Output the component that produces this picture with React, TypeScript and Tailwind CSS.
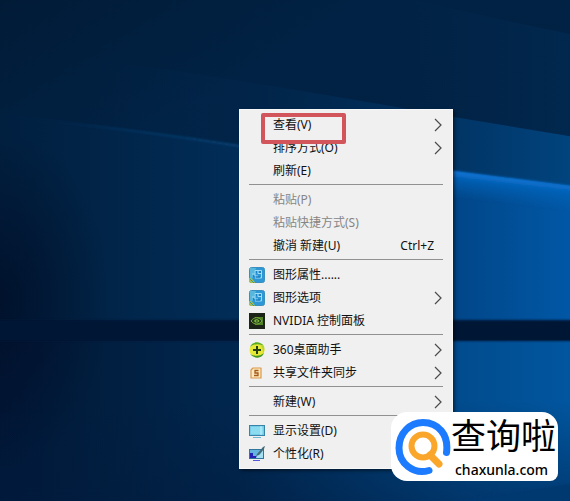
import type { ReactNode } from "react";

function Wallpaper() {
  return (
    <svg
      className="absolute inset-0 h-full w-full"
      viewBox="0 0 570 501"
      preserveAspectRatio="none"
      aria-hidden="true"
    >
      <defs>
        <linearGradient id="sky" x1="0" y1="0" x2="0.7" y2="1">
          <stop offset="0" stopColor="#011b37" />
          <stop offset="0.3" stopColor="#012244" />
          <stop offset="1" stopColor="#012143" />
        </linearGradient>
        <linearGradient id="faintRay" x1="0" y1="0" x2="1" y2="0">
          <stop offset="0" stopColor="#012a52" stopOpacity="0" />
          <stop offset="1" stopColor="#012d57" stopOpacity="0.6" />
        </linearGradient>
        <linearGradient id="beamTop" x1="0" y1="0" x2="1" y2="0">
          <stop offset="0" stopColor="#012a55" stopOpacity="0" />
          <stop offset="0.3" stopColor="#012950" stopOpacity="0.3" />
          <stop offset="0.8" stopColor="#01386b" />
          <stop offset="1" stopColor="#014580" />
        </linearGradient>
        <linearGradient id="pane" x1="0" y1="0" x2="1" y2="0">
          <stop offset="0" stopColor="#011f3f" />
          <stop offset="0.18" stopColor="#012447" />
          <stop offset="0.42" stopColor="#012d58" />
          <stop offset="0.8" stopColor="#01478a" />
          <stop offset="1" stopColor="#0159a8" />
        </linearGradient>
        <radialGradient id="leftShade" cx="0.5" cy="0.5" r="0.5">
          <stop offset="0" stopColor="#000e27" stopOpacity="0.8" />
          <stop offset="1" stopColor="#000e27" stopOpacity="0" />
        </radialGradient>
        <linearGradient id="lowerPane" x1="0" y1="0" x2="1" y2="0">
          <stop offset="0" stopColor="#011737" />
          <stop offset="0.2" stopColor="#011f40" />
          <stop offset="0.42" stopColor="#01274f" />
          <stop offset="0.8" stopColor="#014c8e" />
          <stop offset="1" stopColor="#0157a1" />
        </linearGradient>
        <linearGradient id="floor" x1="0" y1="0" x2="0" y2="1">
          <stop offset="0" stopColor="#001b3e" stopOpacity="0" />
          <stop offset="1" stopColor="#001b3e" stopOpacity="0.45" />
        </linearGradient>
        <linearGradient id="ray" gradientUnits="userSpaceOnUse" x1="512" y1="178" x2="509" y2="204">
          <stop offset="0" stopColor="#0b78da" />
          <stop offset="0.3" stopColor="#0766bf" stopOpacity="0.7" />
          <stop offset="1" stopColor="#0560b4" stopOpacity="0" />
        </linearGradient>
        <linearGradient id="leftRay" x1="0" y1="0" x2="1" y2="0">
          <stop offset="0" stopColor="#0a3e70" stopOpacity="0" />
          <stop offset="1" stopColor="#0a4276" />
        </linearGradient>
        <filter id="edge" x="-5%" y="-20%" width="110%" height="140%">
          <feGaussianBlur stdDeviation="1" />
        </filter>
      </defs>
      <rect width="570" height="501" fill="url(#sky)" />
      <path d="M400 -4 Q490 18 580 36 V140 H400Z" fill="url(#faintRay)" />
      <path d="M90 58 Q280 86 454 117 L580 138 V330 H90Z" fill="url(#beamTop)" />
      <path d="M-10 112 Q120 126 240 146 L454 171 L580 187 V330 H-10Z" fill="url(#pane)" />
      <path d="M50 122 Q140 130 240 146" fill="none" stroke="url(#leftRay)" strokeWidth="2" filter="url(#edge)" />
      <path d="M440 169 L580 187 V214 L440 196Z" fill="url(#ray)" filter="url(#edge)" />
      <rect x="-10" y="340" width="590" height="170" fill="url(#lowerPane)" />
      <rect y="400" width="570" height="101" fill="url(#floor)" />
      <ellipse cx="0" cy="300" rx="110" ry="170" fill="url(#leftShade)" />
      <rect x="-10" y="320" width="590" height="21" fill="#011734" filter="url(#edge)" />
      <path d="M454 501 Q520 492 580 482 V510 H454Z" fill="#01386f" filter="url(#edge)" />
    </svg>
  );
}

function GraphicsIcon() {
  return (
    <svg width="16" height="16" viewBox="0 0 16 16" aria-hidden="true">
      <rect x="0.5" y="0.5" width="15" height="15" rx="2" fill="#2e98d6" stroke="#3a8fbf" />
      <path d="M1 1h6L2 15H1Z" fill="#58b7dd" />
      <path d="M3 7h3V3.500h6.500V11H6M9 3.500v3h3.500M6 7v2h3" fill="none" stroke="#9fdcf5" />
      <path d="M7 5h1M10 5h2M7 10h4M4 9h1" stroke="#0f6bb0" />
      <path d="M0 11c3 0 5 2 6 5H2a2 2 0 0 1-2-2Z" fill="#a8bd55" />
      <path d="M1 12l4 4" stroke="#349e8a" />
    </svg>
  );
}

function NvidiaIcon() {
  return (
    <svg width="16" height="16" viewBox="0 0 16 16" aria-hidden="true">
      <rect width="16" height="16" fill="#1c2418" />
      <path d="M6 4h8v8H6z" fill="#4f8220" />
      <path d="M2 8c3-4.500 8-4.500 11 0-3 4-8 4-11 0Z" fill="#24401b" stroke="#79a93a" />
      <path d="M5 8c1-2.500 4-2.500 5.500 0C9 10 6 10 5 8Z" fill="#86bd3c" />
      <path d="M6.500 8 8 7l1 1-1 1Z" fill="#264a1b" />
    </svg>
  );
}

function AssistantIcon() {
  return (
    <svg width="16" height="16" viewBox="0 0 16 16" aria-hidden="true">
      <circle cx="8" cy="8" r="7.500" fill="#e6e837" />
      <path d="M1 5C3-1 11-1 15 4 11 2 6 1 1 5Z" fill="#58ac24" />
      <path d="M15 11c-2 6-10 6-14 1 4 2 9 3 14-1Z" fill="#3e9426" />
      <path d="M15 4c1 3 0 6-1 7 0-3 0-5-3-8Z" fill="#b5d62c" />
      <path d="M8 4v8M4 8h8" stroke="#263e13" strokeWidth="2" />
    </svg>
  );
}

function SyncIcon() {
  return (
    <svg width="16" height="16" viewBox="0 0 16 16" aria-hidden="true">
      <path d="M4 3h8v10H2V5Z" fill="#fce9bf" stroke="#d9994c" strokeWidth="1.200" strokeLinejoin="round" />
      <path d="M9.500 5.500H6v2.500h3v2.500H5" fill="none" stroke="#a75a18" strokeWidth="1.300" />
    </svg>
  );
}

function DisplayIcon() {
  return (
    <svg width="16" height="16" viewBox="0 0 16 16" aria-hidden="true">
      <rect x="0.500" y="2.500" width="15" height="10" fill="#77cce9" stroke="#3784a8" />
      <path d="M2 4h12v7H2z" fill="#8bdbf1" />
      <path d="M12 3v9" stroke="#c4f2fb" />
      <path d="M4 14.500h8" stroke="#6fb6d1" />
    </svg>
  );
}

function PersonalizeIcon() {
  return (
    <svg width="16" height="16" viewBox="0 0 16 16" aria-hidden="true">
      <rect x="0.500" y="3.500" width="14" height="9" fill="#65b4e0" stroke="#32769e" />
      <path d="M1 7h3v3h4v2H1Z" fill="#2421b4" />
      <path d="M8 9c3 0 4-2 6-5v8H7Z" fill="#a6def1" />
      <path d="m8 8 6-7 2-1-1 3-5 6-3 1Z" fill="#426c76" />
      <path d="M4 14.500h7" stroke="#5757dc" />
    </svg>
  );
}

function Chevron() {
  return (
    <svg className="mr-px ml-auto" width="8" height="14" viewBox="0 0 8 14" fill="none" aria-hidden="true">
      <path d="m1 1 6 6-6 6" stroke="#4b4b4b" strokeWidth="1.200" />
    </svg>
  );
}

type Item = {
  label: string;
  icon?: ReactNode;
  submenu?: boolean;
  shortcut?: string;
  disabled?: boolean;
  highlighted?: boolean;
};

const groups: Item[][] = [
  [
    { label: "查看(V)", submenu: true, highlighted: true },
    { label: "排序方式(O)", submenu: true },
    { label: "刷新(E)" },
  ],
  [
    { label: "粘贴(P)", disabled: true },
    { label: "粘贴快捷方式(S)", disabled: true },
    { label: "撤消 新建(U)", shortcut: "Ctrl+Z" },
  ],
  [
    { label: "图形属性......", icon: <GraphicsIcon /> },
    { label: "图形选项", icon: <GraphicsIcon />, submenu: true },
    { label: "NVIDIA 控制面板", icon: <NvidiaIcon /> },
  ],
  [
    { label: "360桌面助手", icon: <AssistantIcon />, submenu: true },
    { label: "共享文件夹同步", icon: <SyncIcon />, submenu: true },
  ],
  [{ label: "新建(W)", submenu: true }],
  [
    { label: "显示设置(D)", icon: <DisplayIcon /> },
    { label: "个性化(R)", icon: <PersonalizeIcon /> },
  ],
];

function MenuRow({ item }: { item: Item }) {
  return (
    <button
      type="button"
      role="menuitem"
      disabled={item.disabled}
      aria-haspopup={item.submenu ? "menu" : undefined}
      className="relative flex h-[23px] w-full items-center px-[9px] text-left text-[#111111] disabled:text-[#858585]"
    >
      <span className="mr-2 flex w-4 shrink-0">{item.icon}</span>
      <span className="whitespace-pre">{item.label}</span>
      {item.submenu && <Chevron />}
      {item.shortcut && <span className="mr-[9px] ml-auto">{item.shortcut}</span>}
      {item.highlighted && (
        <span className="pointer-events-none absolute top-0 left-[21px] z-10 h-[31px] w-[85px] rounded-xs border-4 border-[#d2555c]" />
      )}
    </button>
  );
}

function ContextMenu() {
  return (
    <div
      role="menu"
      aria-label="桌面"
      className="absolute top-[109px] left-[239px] w-[214px] border border-[#f8f8f8] bg-[#f0f0f0] py-[3px] text-xs shadow-[2px_2px_3px_rgba(0,0,0,0.45)]"
    >
      {groups.map((group, index) => (
        <div key={index} role="group">
          {index > 0 && <hr className="mx-[9px] mt-[2px] mb-[3px] border-t border-[#919191]" />}
          {group.map((item) => (
            <MenuRow key={item.label} item={item} />
          ))}
        </div>
      ))}
    </div>
  );
}

function SiteBadge() {
  return (
    <div className="absolute right-3 bottom-5 flex h-[69px] w-[167px] items-center overflow-hidden rounded-2xl rounded-br-lg bg-white pl-1 text-black">
      <svg className="shrink-0" width="56" height="58" viewBox="0 0 56 58" aria-hidden="true">
        <path d="M34 52.500C18 57 4 45 4 30 4 15 15 4.500 28 4.500c15 0 26 12 23.500 30" fill="none" stroke="#1d7bff" strokeWidth="7" strokeLinecap="round" />
        <circle cx="28" cy="28" r="11.500" fill="none" stroke="#f9a62b" strokeWidth="6" />
        <path d="m35 37 9 9" stroke="#f9a62b" strokeWidth="7" strokeLinecap="round" />
      </svg>
      <div className="flex flex-col whitespace-nowrap">
        <span className="h-[46px] text-[35px] leading-10">查询啦</span>
        <span className="h-4 pl-1 text-sm leading-4 font-medium">chaxunla.com</span>
      </div>
    </div>
  );
}

export default function App() {
  return (
    <main className="relative min-h-screen overflow-hidden bg-[#01244b] font-['Noto_Sans','Noto_Sans_CJK_SC',sans-serif]" lang="zh-CN">
      <Wallpaper />
      <ContextMenu />
      <SiteBadge />
    </main>
  );
}
